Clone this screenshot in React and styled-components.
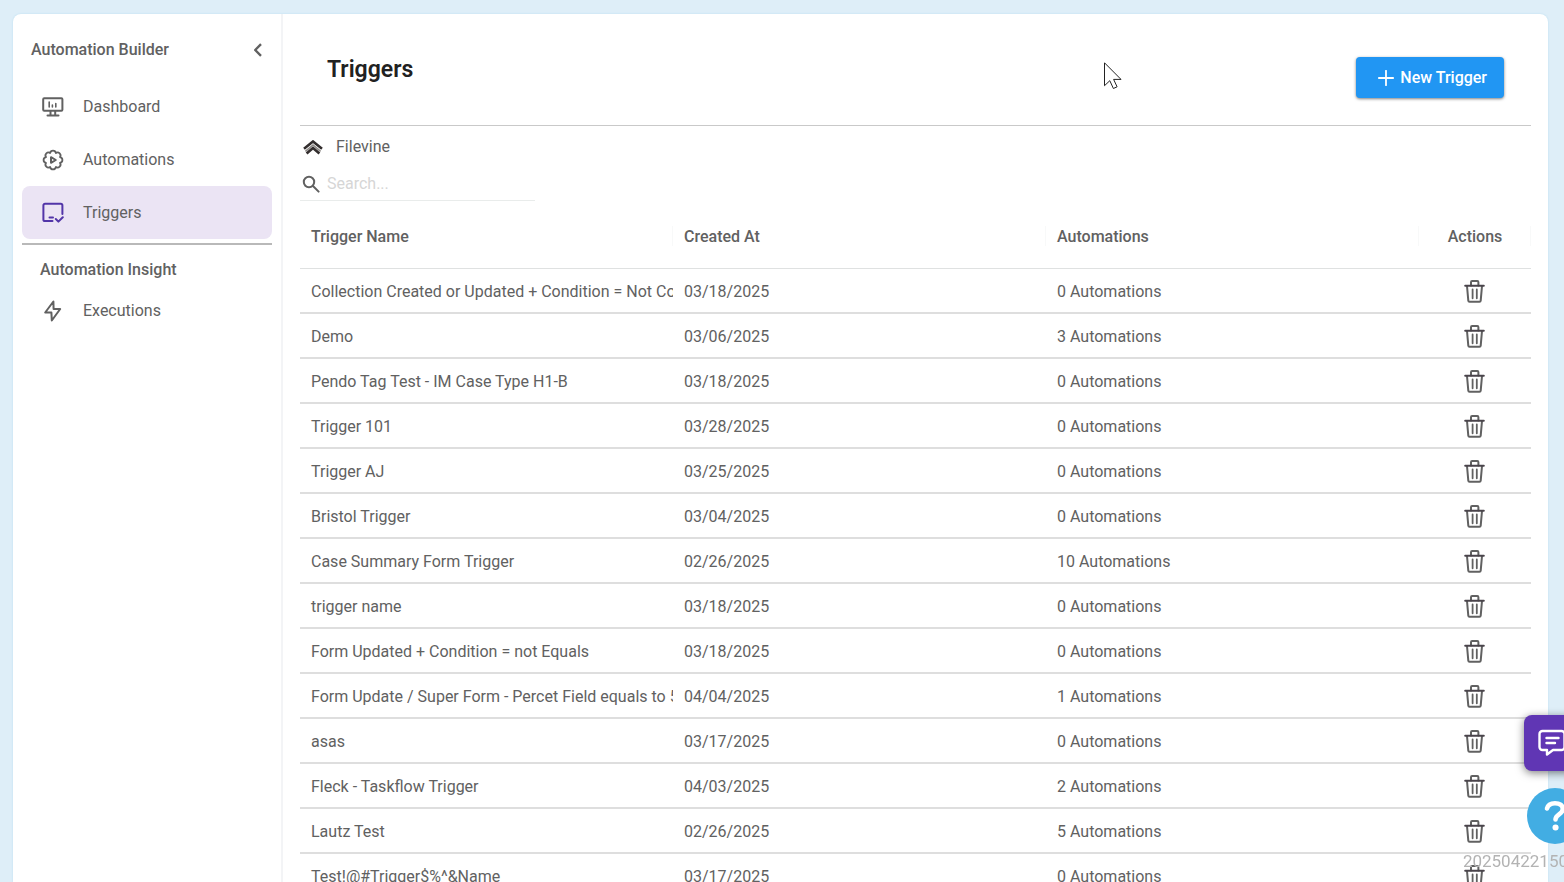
import React, { useState } from 'react'
import styled, { createGlobalStyle } from 'styled-components'

const colors = {
  page: '#deeef8',
  white: '#ffffff',
  text: '#616161',
  heading: '#212121',
  blue: '#2196f3',
  purple: '#6036b4',
  lavender: '#ebe4f4',
  help: '#42ade3',
}

const triggers = [
  { name: 'Collection Created or Updated + Condition = Not Contains', date: '03/18/2025', count: 0 },
  { name: 'Demo', date: '03/06/2025', count: 3 },
  { name: 'Pendo Tag Test - IM Case Type H1-B', date: '03/18/2025', count: 0 },
  { name: 'Trigger 101', date: '03/28/2025', count: 0 },
  { name: 'Trigger AJ', date: '03/25/2025', count: 0 },
  { name: 'Bristol Trigger', date: '03/04/2025', count: 0 },
  { name: 'Case Summary Form Trigger', date: '02/26/2025', count: 10 },
  { name: 'trigger name', date: '03/18/2025', count: 0 },
  { name: 'Form Updated + Condition = not Equals', date: '03/18/2025', count: 0 },
  { name: 'Form Update / Super Form - Percet Field equals to 5', date: '04/04/2025', count: 1 },
  { name: 'asas', date: '03/17/2025', count: 0 },
  { name: 'Fleck - Taskflow Trigger', date: '04/03/2025', count: 2 },
  { name: 'Lautz Test', date: '02/26/2025', count: 5 },
  { name: 'Test!@#Trigger$%^&Name', date: '03/17/2025', count: 0 },
]

const DashboardIcon = () => (
  <Icon width='22' height='22' viewBox='0 0 22 22' $stroke={2}>
    <rect x='1.2' y='2.2' width='19.2' height='12.6' rx='1' />
    <path d='M8.5 15v4M13.2 15v4M5.5 19.4h11' />
    <path d='M7.2 6v5M10.4 9v2M13.8 7.5V11' strokeWidth='1.6' />
  </Icon>
)

const AutomationsIcon = () => (
  <Icon width='22' height='22' viewBox='0 0 22 22'>
    <path d='M8.1 4a2.95 2.95 0 0 1 5.8 0a2.95 2.95 0 0 1 4.1 4.1a2.95 2.95 0 0 1 0 5.8a2.95 2.95 0 0 1-4.1 4.1a2.95 2.95 0 0 1-5.8 0a2.95 2.95 0 0 1-4.1-4.1a2.95 2.95 0 0 1 0-5.8a2.95 2.95 0 0 1 4.1-4.1z' />
    <path d='M9 8.2v5.6l4.8-2.8z' strokeWidth='2' />
  </Icon>
)

const TriggersIcon = () => (
  <Icon width='22' height='22' viewBox='0 0 22 22' $color='#5235a8' $stroke={2}>
    <path d='M10.5 19H3a1.6 1.6 0 0 1-1.6-1.6V3.4A1.6 1.6 0 0 1 3 1.8h15.8a1.6 1.6 0 0 1 1.6 1.6V12' />
    <path d='M7.5 15.4H11M13.8 17l2.6 2.6 4.4-4.4' />
  </Icon>
)

const ExecutionsIcon = () => (
  <Icon width='22' height='22' viewBox='0 0 22 22' $stroke={2}>
    <path d='M11.4 1.5L3.2 12.5h6.2l.4 8 8.4-11.5h-6.6z' />
  </Icon>
)

const TrashIcon = () => (
  <Icon width='22' height='23' viewBox='0 0 22 23' $stroke={2}>
    <path d='M7 5.5V2.2q0-1.1 1.1-1.1h5.2q1.1 0 1.1 1.1v3.3M3 6l1.3 14.600q.1 1.1 1.2 1.1h10q1.1 0 1.2-1.1L18 6' />
    <path d='M8.6 9.5v8.8M12.8 9.5v8.8' strokeWidth='1.8' />
    <path d='M1.2 5.8h18.6' stroke='#4a444b' />
  </Icon>
)

const App = () => {
  const [search, setSearch] = useState('')
  const rows = triggers.filter((t) =>
    t.name.toLowerCase().includes(search.toLowerCase())
  )

  return (
    <>
      <GlobalStyle />
      <Page>
        <Card>
          <Sidebar>
            <SidebarHeader>
              <SidebarTitle>Automation Builder</SidebarTitle>
              <IconButton aria-label='Collapse menu'>
                <Icon width='10' height='14' viewBox='0 0 10 14' $stroke={2.4}>
                  <path d='M8 1.2L2.2 7 8 12.8' strokeLinecap='butt' />
                </Icon>
              </IconButton>
            </SidebarHeader>
            <nav>
              <NavItem href='#dashboard'>
                <DashboardIcon />
                Dashboard
              </NavItem>
              <NavItem href='#automations'>
                <AutomationsIcon />
                Automations
              </NavItem>
              <NavItem href='#triggers' $active aria-current='page'>
                <TriggersIcon />
                Triggers
              </NavItem>
              <NavDivider />
              <SectionTitle>Automation Insight</SectionTitle>
              <NavItem href='#executions'>
                <ExecutionsIcon />
                Executions
              </NavItem>
            </nav>
          </Sidebar>

          <Main>
            <Header>
              <Title>Triggers</Title>
              <NewButton>
                <Icon width='16' height='16' viewBox='0 0 16 16' $color={colors.white}>
                  <path d='M8 .8v14.4M.8 8h14.4' />
                </Icon>
                New Trigger
              </NewButton>
            </Header>

            <Source>
              <svg width='20' height='15' viewBox='0 0 20 15' fill='none'>
                <path d='M1 8.8l9-7.3 9 7.3' stroke='#332e2e' strokeWidth='2.6' />
                <path d='M2.4 11.4L10 5l7.6 6.4' stroke='#8f8b88' strokeWidth='1.6' />
                <path d='M3.6 13.6L10 8l6.4 5.6' stroke='#332e2e' strokeWidth='2.6' />
              </svg>
              Filevine
            </Source>

            <SearchBox>
              <Icon width='18' height='18' viewBox='0 0 18 18' $stroke={2}>
                <circle cx='7' cy='7' r='5.2' />
                <path d='M11 11l5.6 5.6' />
              </Icon>
              <SearchInput
                type='text'
                placeholder='Search...'
                aria-label='Search triggers'
                value={search}
                onChange={(e) => setSearch(e.target.value)}
              />
            </SearchBox>

            <Table>
              <thead>
                <tr>
                  <HeadCell>Trigger Name</HeadCell>
                  <HeadCell>Created At</HeadCell>
                  <HeadCell>Automations</HeadCell>
                  <HeadCell $action>Actions</HeadCell>
                </tr>
              </thead>
              <tbody>
                {rows.map((t) => (
                  <tr key={t.name}>
                    <Cell>{t.name}</Cell>
                    <Cell>{t.date}</Cell>
                    <Cell>{t.count} Automations</Cell>
                    <Cell $action>
                      <IconButton aria-label={`Delete ${t.name}`}>
                        <TrashIcon />
                      </IconButton>
                    </Cell>
                  </tr>
                ))}
              </tbody>
            </Table>
          </Main>
        </Card>
      </Page>

      <ChatButton aria-label='Open chat'>
        <Icon width='28' height='28' viewBox='0 0 28 28' $color={colors.white} $stroke={2.4}>
          <path d='M4.5 2h19a3 3 0 0 1 3 3v13a3 3 0 0 1-3 3H15L9 25.5V21H4.5a3 3 0 0 1-3-3V5a3 3 0 0 1 3-3z' />
          <path d='M8.5 9h12M8.5 14H17' />
        </Icon>
      </ChatButton>
      <HelpButton aria-label='Help'>
        <Icon width='22' height='32' viewBox='0 0 22 32' $color={colors.white} $stroke={4.6}>
          <path d='M3 8.5C4 4.5 7 3.2 11 3.2c4.6 0 7.8 2 7.8 5.8 0 5.400-7.300 5.400-7.300 10.500' />
          <path d='M11.5 27.5h.1' strokeWidth='6' />
        </Icon>
      </HelpButton>
      <BuildStamp>20250422150</BuildStamp>
      <Cursor width='18' height='28' viewBox='0 0 18 28'>
        <path
          d='M.5.8v22.9l5.3-5 3.6 7.8 3.7-1.7-3.5-7.4H17z'
          fill='#fff'
          stroke='#222'
        />
      </Cursor>
    </>
  )
}

const GlobalStyle = createGlobalStyle`
  * {
    box-sizing: border-box;
  }

  body {
    margin: 0;
    overflow: hidden;
    background: ${colors.page};
    color: ${colors.text};
    font-family: Roboto, sans-serif;
    font-size: 16px;
    line-height: 24px;
  }

  button,
  input {
    font: inherit;
    color: inherit;
  }
`

const Icon = styled.svg`
  display: block;
  flex-shrink: 0;
  fill: none;
  stroke: ${({ $color }) => $color || colors.text};
  stroke-width: ${({ $stroke }) => $stroke || 1.8};
  stroke-linecap: round;
  stroke-linejoin: round;
`

const Page = styled.div`
  display: flex;
  height: 100vh;
  padding: 14px 16px 0 13px;
`

const Card = styled.div`
  display: flex;
  flex: 1;
  min-width: 0;
  overflow: hidden;
  background: ${colors.white};
  border-radius: 8px 8px 0 0;
  box-shadow: 0 0 2px #b5dcef;
`

const Sidebar = styled.aside`
  flex: 0 0 270px;
  padding: 0 9px;
  border-right: 2px solid #f3f4f6;
`

const SidebarHeader = styled.div`
  display: flex;
  align-items: center;
  justify-content: space-between;
  padding: 24px 9px 18px;
`

const SidebarTitle = styled.span`
  font-weight: 500;
`

const IconButton = styled.button`
  display: inline-flex;
  padding: 0;
  border: none;
  background: none;
  cursor: pointer;
  vertical-align: middle;
`

const NavItem = styled.a`
  display: flex;
  align-items: center;
  gap: 19px;
  height: 53px;
  padding: 0 20px;
  border-radius: 8px;
  color: inherit;
  text-decoration: none;
  background: ${({ $active }) => ($active ? colors.lavender : 'transparent')};
`

const NavDivider = styled.hr`
  height: 2px;
  margin: 4px 0 10px;
  border: none;
  background: #b9b9b9;
`

const SectionTitle = styled.div`
  padding: 1px 0 0 18px;
  font-weight: 500;
  line-height: 28px;
`

const Main = styled.main`
  flex: 1;
  min-width: 0;
  padding: 0 17px;
`

const Header = styled.header`
  display: flex;
  align-items: flex-start;
  justify-content: space-between;
  padding: 43px 27px 27px;
  border-bottom: 1px solid #c9c9c9;
`

const Title = styled.h1`
  margin: 0;
  font-size: 23px;
  font-weight: 600;
  line-height: 26px;
  color: ${colors.heading};
`

const NewButton = styled.button`
  display: flex;
  align-items: center;
  gap: 6px;
  height: 41px;
  padding: 0 17px 0 22px;
  border: none;
  border-radius: 4px;
  background: ${colors.blue};
  box-shadow: 0 1px 3px rgba(0, 0, 0, 0.5);
  color: ${colors.white};
  font-weight: 500;
  cursor: pointer;
`

const Source = styled.div`
  display: flex;
  align-items: center;
  gap: 13px;
  height: 40px;
  padding: 2px 0 0 3px;
`

const SearchBox = styled.label`
  display: flex;
  align-items: center;
  gap: 7px;
  width: 235px;
  height: 35px;
  padding: 1px 0 0 2px;
  border-bottom: 1px solid #e9eceb;
`

const SearchInput = styled.input`
  flex: 1;
  min-width: 0;
  padding: 0;
  border: none;
  outline: none;
  background: none;

  &::placeholder {
    color: #d6d6d6;
  }
`

const Table = styled.table`
  width: 100%;
  margin-top: 3px;
  border-spacing: 0;
  table-layout: fixed;
`

const HeadCell = styled.th`
  width: ${({ $action }) => ($action ? '112px' : 'auto')};
  height: 65px;
  padding: ${({ $action }) => ($action ? '2px 0 0' : '2px 0 0 11px')};
  border-bottom: 1px solid #dfe1e1;
  background: linear-gradient(#f8f9f9, #f8f9f9) right center / 1px 20px no-repeat;
  font-weight: 500;
  text-align: ${({ $action }) => ($action ? 'center' : 'left')};
`

const Cell = styled.td`
  height: 45px;
  padding: ${({ $action }) => ($action ? 0 : '2px 0 0 11px')};
  border-bottom: 2px solid #dedede;
  overflow: hidden;
  white-space: nowrap;
  text-align: ${({ $action }) => ($action ? 'center' : 'left')};
`

const ChatButton = styled.button`
  position: fixed;
  right: -16px;
  bottom: 111px;
  width: 56px;
  height: 56px;
  padding: 0 14px;
  border: none;
  border-radius: 8px;
  background: ${colors.purple};
  box-shadow: 0 2px 8px rgba(0, 0, 0, 0.5);
`

const HelpButton = styled.button`
  position: fixed;
  right: -19px;
  bottom: 38px;
  display: flex;
  align-items: center;
  justify-content: center;
  width: 56px;
  height: 56px;
  padding: 0;
  border: none;
  border-radius: 50%;
  background: ${colors.help};
`

const BuildStamp = styled.div`
  position: fixed;
  right: -4px;
  bottom: 9px;
  font-size: 17px;
  color: #b3b3b3;
`

const Cursor = styled.svg`
  position: fixed;
  top: 62px;
  left: 1104px;
  pointer-events: none;
`

export default App
